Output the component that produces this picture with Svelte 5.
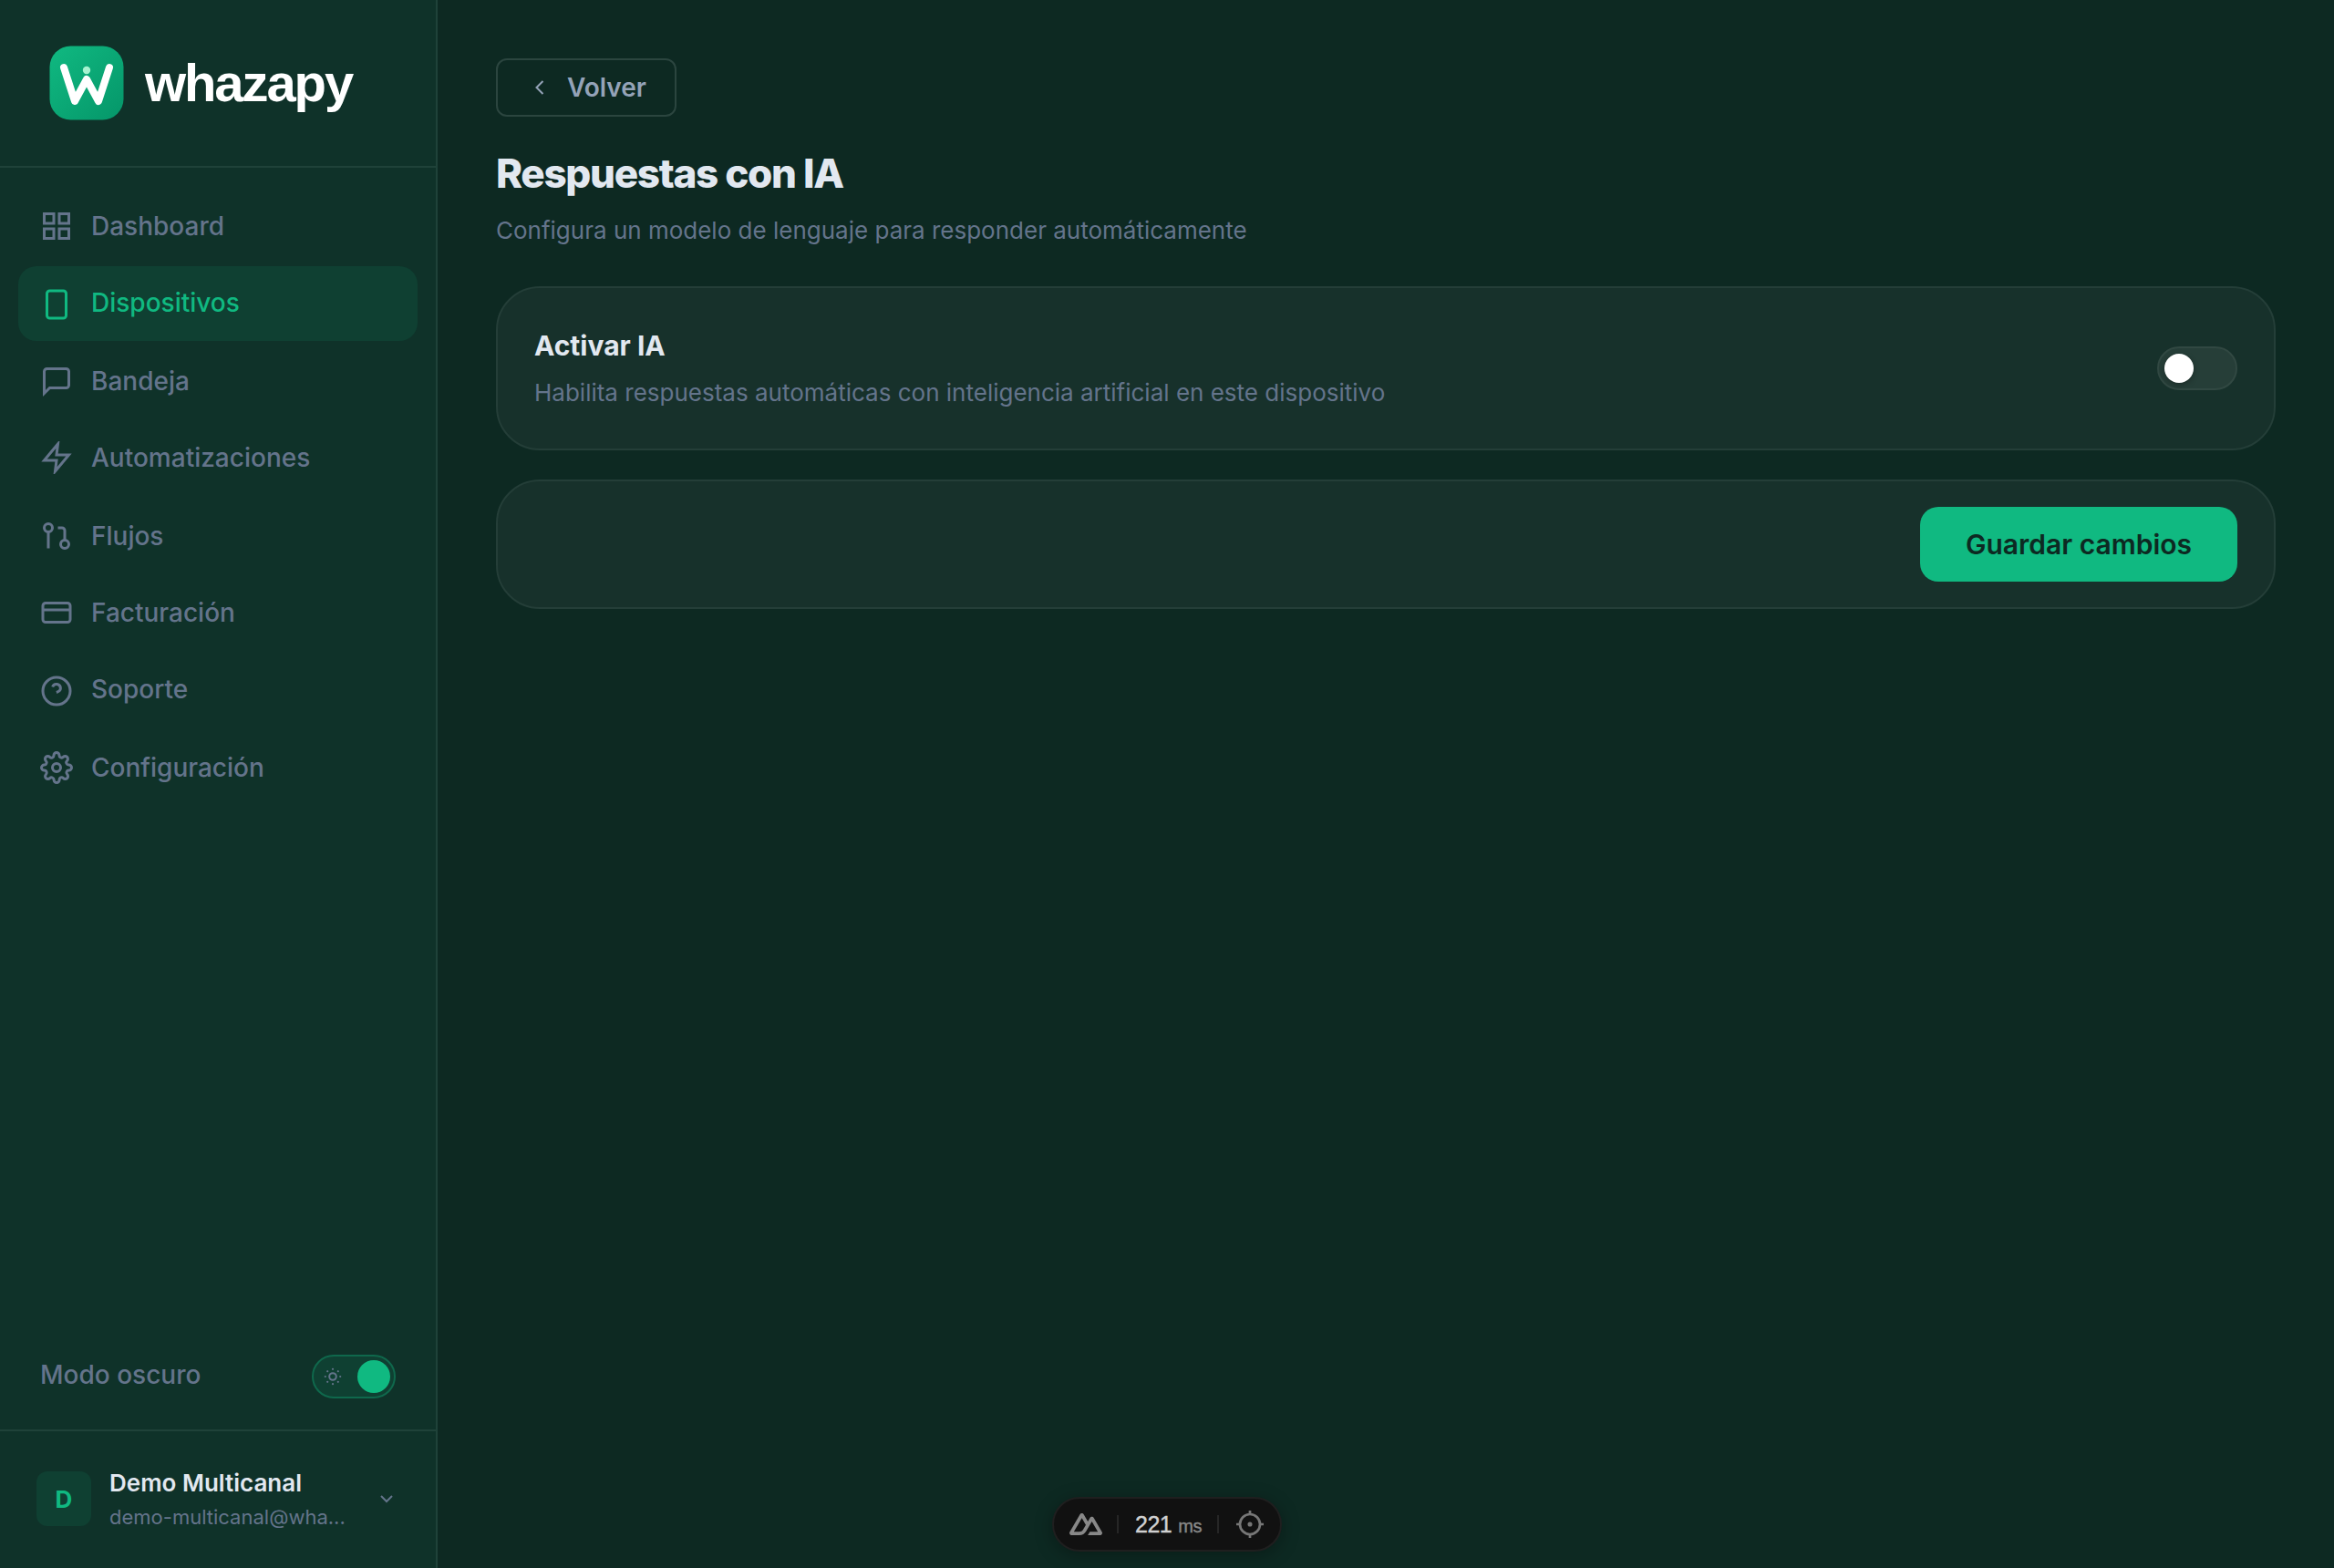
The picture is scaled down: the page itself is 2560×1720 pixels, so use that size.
<script>
  const navItems = [
    { label: 'Dashboard', icon: 'grid' },
    { label: 'Dispositivos', icon: 'device' },
    { label: 'Bandeja', icon: 'message' },
    { label: 'Automatizaciones', icon: 'zap' },
    { label: 'Flujos', icon: 'flow' },
    { label: 'Facturación', icon: 'card' },
    { label: 'Soporte', icon: 'help' },
    { label: 'Configuración', icon: 'settings' }
  ];

  let active = $state('Dispositivos');
  let aiEnabled = $state(false);
  let darkMode = $state(true);
</script>

<div class="app">
  <aside class="sidebar">
    <div class="brand">
      <svg class="brand-mark" viewBox="0 0 82 82">
        <defs>
          <linearGradient id="brand-fill" x1="0" y1="0" x2="1" y2="1">
            <stop offset="0" stop-color="#10b981" />
            <stop offset="1" stop-color="#059669" />
          </linearGradient>
        </defs>
        <rect x="0.5" y="0.5" width="81" height="81" rx="23" fill="url(#brand-fill)" />
        <path d="M16 24 L28 61 L41 37 L54 61 L66 24" fill="none" stroke="#ffffff" stroke-width="8"
              stroke-linecap="round" stroke-linejoin="round" />
        <circle cx="41" cy="27" r="4.2" fill="#a7f3d0" />
      </svg>
      <span class="brand-name">whazapy</span>
    </div>

    <nav class="nav">
      {#each navItems as item}
        <button class="nav-item" class:active={active === item.label} onclick={() => (active = item.label)}>
          <svg class="nav-icon" viewBox="0 0 24 24">
            {#if item.icon === 'grid'}
              <rect x="3" y="3" width="7" height="7" />
              <rect x="14" y="3" width="7" height="7" />
              <rect x="14" y="14" width="7" height="7" />
              <rect x="3" y="14" width="7" height="7" />
            {:else if item.icon === 'device'}
              <rect x="5" y="2" width="14" height="20" rx="2" />
            {:else if item.icon === 'message'}
              <path d="M21 15a2 2 0 0 1-2 2H7l-4 4V5a2 2 0 0 1 2-2h14a2 2 0 0 1 2 2z" />
            {:else if item.icon === 'zap'}
              <polygon points="13 2 3 14 12 14 11 22 21 10 12 10 13 2" />
            {:else if item.icon === 'flow'}
              <circle cx="18" cy="18" r="3" />
              <circle cx="6" cy="6" r="3" />
              <path d="M13 6h3a2 2 0 0 1 2 2v7M6 9v12" />
            {:else if item.icon === 'card'}
              <rect x="2" y="5" width="20" height="14" rx="2" />
              <path d="M2 10h20" />
            {:else if item.icon === 'help'}
              <circle cx="12" cy="12" r="10" />
              <path d="M9.09 9a3 3 0 0 1 5.83 1c0 2-3 3-3 3" />
            {:else}
              <circle cx="12" cy="12" r="3" />
              <path d="M19.4 15a1.65 1.65 0 0 0 .33 1.82l.06.06a2 2 0 0 1 0 2.83 2 2 0 0 1-2.83 0l-.06-.06a1.65 1.65 0 0 0-1.82-.33 1.65 1.65 0 0 0-1 1.51V21a2 2 0 0 1-2 2 2 2 0 0 1-2-2v-.09A1.65 1.65 0 0 0 9 19.4a1.65 1.65 0 0 0-1.82.33l-.06.06a2 2 0 0 1-2.83 0 2 2 0 0 1 0-2.83l.06-.06a1.65 1.65 0 0 0 .33-1.82 1.65 1.65 0 0 0-1.51-1H3a2 2 0 0 1-2-2 2 2 0 0 1 2-2h.09A1.65 1.65 0 0 0 4.6 9a1.65 1.65 0 0 0-.33-1.82l-.06-.06a2 2 0 0 1 0-2.83 2 2 0 0 1 2.83 0l.06.06a1.65 1.65 0 0 0 1.82.33H9a1.65 1.65 0 0 0 1-1.51V3a2 2 0 0 1 2-2 2 2 0 0 1 2 2v.09a1.65 1.65 0 0 0 1 1.51 1.65 1.65 0 0 0 1.82-.33l.06-.06a2 2 0 0 1 2.83 0 2 2 0 0 1 0 2.83l-.06.06a1.65 1.65 0 0 0-.33 1.82V9a1.65 1.65 0 0 0 1.51 1H21a2 2 0 0 1 2 2 2 2 0 0 1-2 2h-.09a1.65 1.65 0 0 0-1.51 1z" />
            {/if}
          </svg>
          <span class="nav-label">{item.label}</span>
        </button>
      {/each}
    </nav>

    <div class="theme-row">
      <span class="theme-label">Modo oscuro</span>
      <button class="theme-toggle" class:on={darkMode} aria-label="Modo oscuro" onclick={() => (darkMode = !darkMode)}>
        <svg class="sun" viewBox="0 0 20 20">
          <circle cx="10" cy="10" r="3.8" fill="none" stroke="currentColor" stroke-width="2" />
          {#each Array(8) as _, i}
            <circle cx="10" cy="1.8" r="1.1" fill="currentColor" transform="rotate({i * 45} 10 10)" />
          {/each}
        </svg>
        <span class="theme-knob"></span>
      </button>
    </div>

    <div class="user">
      <div class="avatar">D</div>
      <div class="user-info">
        <div class="user-name">Demo Multicanal</div>
        <div class="user-email">demo-multicanal@wha...</div>
      </div>
      <svg class="user-chevron" viewBox="0 0 24 24">
        <polyline points="6 9 12 15 18 9" />
      </svg>
    </div>
  </aside>

  <main class="content">
    <button class="back">
      <svg class="back-icon" viewBox="0 0 24 24">
        <path d="M15 5l-7 7 7 7" />
      </svg>
      <span>Volver</span>
    </button>
    <h1>Respuestas con IA</h1>
    <p class="subtitle">Configura un modelo de lenguaje para responder automáticamente</p>

    <section class="card card-toggle">
      <div class="card-body">
        <h2>Activar IA</h2>
        <p class="card-text">Habilita respuestas automáticas con inteligencia artificial en este dispositivo</p>
      </div>
      <button class="switch" class:on={aiEnabled} aria-label="Activar IA" onclick={() => (aiEnabled = !aiEnabled)}>
        <span class="switch-knob"></span>
      </button>
    </section>

    <section class="card card-actions">
      <button class="save">Guardar cambios</button>
    </section>
  </main>

  <!-- Devtools pill, floats over the page -->
  <div class="devtools">
    <svg class="devtools-logo" viewBox="0 54 324 216">
      <path d="M181.767 270H302.211C306.037 270 309.795 269.003 313.108 267.107C316.421 265.211 319.172 262.484 321.084 259.2C322.996 255.915 324.002 252.19 324 248.399C323.998 244.607 322.989 240.883 321.074 237.601L240.187 98.744C238.275 95.461 235.525 92.734 232.213 90.839C228.901 88.943 225.143 87.945 221.318 87.945C217.494 87.945 213.736 88.943 210.424 90.839C207.112 92.734 204.361 95.461 202.449 98.744L181.767 134.272L141.329 64.798C139.416 61.515 136.664 58.788 133.351 56.893C130.038 54.998 126.28 54 122.454 54C118.629 54 114.871 54.998 111.558 56.893C108.245 58.788 105.493 61.515 103.58 64.798L2.926 237.601C1.011 240.883 0 244.607 0 248.399C0 252.19 1.004 255.915 2.916 259.2C4.828 262.484 7.579 265.211 10.892 267.107C14.205 269.003 17.963 270 21.789 270H97.394C127.349 270 149.44 256.959 164.641 231.517L201.546 168.172L221.313 134.272L280.637 236.1H201.546L181.767 270ZM96.161 236.065L43.398 236.054L122.49 100.291L161.953 168.172L135.531 213.543C125.436 230.051 113.968 236.065 96.161 236.065Z" fill="currentColor" />
    </svg>
    <span class="devtools-sep"></span>
    <span class="devtools-time">221<small>ms</small></span>
    <span class="devtools-sep"></span>
    <svg class="devtools-target" viewBox="0 0 30 30">
      <circle cx="15" cy="15" r="11" />
      <circle cx="15" cy="15" r="1.2" />
      <path d="M15 0v5M15 25v5M0 15h5M25 15h5" />
    </svg>
  </div>
</div>

<style>
  :global(body) {
    background: #0d2922;
  }

  .app {
    display: flex;
    width: 2560px;
    height: 1720px;
    overflow: hidden;
    background: #0d2922;
    font-family: 'Inter', sans-serif;
    color: #e2e8f0;
  }

  button {
    margin: 0;
    padding: 0;
    border: none;
    background: none;
    font-family: inherit;
    cursor: pointer;
  }

  h1,
  h2,
  p {
    margin: 0;
  }

  .sidebar {
    box-sizing: border-box;
    display: flex;
    flex-direction: column;
    flex: none;
    width: 480px;
    background: #0f3229;
    border-right: 2px solid #1f4239;
  }

  .brand {
    box-sizing: border-box;
    display: flex;
    align-items: flex-start;
    height: 184px;
    padding: 50px 0 0 54px;
    border-bottom: 2px solid #1f4239;
  }

  .brand-mark {
    width: 82px;
    height: 82px;
  }

  .brand-name {
    margin: 8px 0 0 23px;
    font-family: 'Liberation Sans', Arial, sans-serif;
    font-size: 58px;
    font-weight: 700;
    line-height: 66px;
    letter-spacing: -2.1px;
    color: #ffffff;
  }

  .nav {
    display: grid;
    grid-template-rows: 80px 82px 80px 80px 82px 80px 82px 80px;
    row-gap: 4px;
    padding: 24px 20px 0;
  }

  .nav-item {
    display: flex;
    align-items: center;
    gap: 20px;
    padding-left: 24px;
    border-radius: 20px;
    font-size: 28px;
    font-weight: 500;
    line-height: 44px;
    color: #64748b;
  }

  .nav-item.active {
    background: #0f4032;
    color: #10b981;
  }

  .nav-icon {
    width: 36px;
    height: 36px;
    fill: none;
    stroke: currentColor;
    stroke-width: 2;
  }

  .nav-item:nth-child(5) {
    padding-top: 2px;
  }

  .nav-item:nth-child(2) .nav-icon,
  .nav-item:nth-child(7) .nav-icon {
    margin-top: 2px;
  }

  .nav-item:nth-child(2) .nav-label,
  .nav-item:nth-child(7) .nav-label {
    margin-bottom: 2px;
  }

  .theme-row {
    display: flex;
    align-items: center;
    justify-content: space-between;
    margin-top: auto;
    padding: 0 44px 34px;
  }

  .theme-label {
    font-size: 28px;
    font-weight: 500;
    line-height: 44px;
    color: #64748b;
    padding-bottom: 4px;
  }

  .theme-toggle {
    box-sizing: border-box;
    display: flex;
    align-items: center;
    justify-content: space-between;
    width: 92px;
    height: 48px;
    padding: 0 4px 0 11px;
    border: 2px solid #0f684c;
    border-radius: 24px;
    background: #0f4032;
    color: #64748b;
  }

  .sun {
    width: 20px;
    height: 20px;
  }

  .theme-knob {
    width: 36px;
    height: 36px;
    border-radius: 50%;
    background: #10b981;
  }

  .user {
    box-sizing: border-box;
    display: flex;
    align-items: center;
    height: 152px;
    padding: 0 42px 2px 40px;
    border-top: 2px solid #1f4239;
  }

  .avatar {
    width: 60px;
    height: 60px;
    border-radius: 12px;
    background: #0f4032;
    font-size: 26px;
    font-weight: 700;
    line-height: 61px;
    text-align: center;
    color: #10b981;
  }

  .user-info {
    flex: 1;
    margin-left: 20px;
    white-space: nowrap;
  }

  .user-name {
    padding-top: 1px;
    font-size: 26px;
    font-weight: 600;
    line-height: 40px;
  }

  .user-email {
    font-size: 22px;
    line-height: 35px;
    color: #64748b;
  }

  .user-chevron {
    width: 24px;
    height: 24px;
    fill: none;
    stroke: #64748b;
    stroke-width: 2;
  }

  .content {
    flex: 1;
    display: flex;
    flex-direction: column;
    align-items: stretch;
    padding: 64px 64px 0;
  }

  .back {
    box-sizing: border-box;
    display: flex;
    align-items: center;
    align-self: flex-start;
    width: 198px;
    height: 64px;
    padding-left: 33px;
    gap: 16px;
    border: 2px solid #2b453f;
    border-radius: 12px;
    font-size: 28px;
    font-weight: 600;
    color: #94a3b8;
  }

  .back-icon {
    width: 27px;
    height: 24px;
    fill: none;
    stroke: currentColor;
    stroke-width: 2;
  }

  h1 {
    margin-top: 34px;
    font-size: 44px;
    font-weight: 800;
    line-height: 56px;
    letter-spacing: -1.32px;
  }

  .subtitle {
    margin-top: 14px;
    font-size: 26px;
    line-height: 42px;
    color: #64748b;
  }

  .card {
    box-sizing: border-box;
    display: flex;
    align-items: center;
    border: 2px solid #243e38;
    border-radius: 48px;
    background: #17312b;
    padding: 0 40px;
  }

  .card-toggle {
    justify-content: space-between;
    height: 180px;
    margin-top: 40px;
  }

  .card-actions {
    justify-content: flex-end;
    height: 142px;
    margin-top: 32px;
  }

  .card-body {
    padding-bottom: 2px;
  }

  h2 {
    font-size: 30px;
    font-weight: 700;
    line-height: 48px;
  }

  .card-text {
    margin-top: 7px;
    font-size: 26px;
    line-height: 42px;
    color: #64748b;
  }

  .switch {
    box-sizing: border-box;
    display: flex;
    align-items: center;
    width: 88px;
    height: 48px;
    padding: 0 6px;
    border: 2px solid #314842;
    border-radius: 24px;
    background: #263e38;
  }

  .switch.on {
    justify-content: flex-end;
    background: #10b981;
  }

  .switch-knob {
    width: 32px;
    height: 32px;
    border-radius: 50%;
    background: #ffffff;
    box-shadow: 0 2px 6px rgba(0, 0, 0, 0.3);
  }

  .save {
    width: 348px;
    height: 82px;
    border-radius: 20px;
    background: #10b981;
    font-size: 30px;
    font-weight: 600;
    color: #0d2922;
  }

  .devtools {
    position: absolute;
    left: 1154px;
    top: 1642px;
    box-sizing: border-box;
    display: flex;
    align-items: center;
    width: 252px;
    height: 60px;
    padding: 0 17px;
    border: 2px solid #1f1f1f;
    border-radius: 30px;
    background: #111111;
    box-shadow: 0 4px 20px rgba(0, 0, 0, 0.3);
    font-family: 'Liberation Sans', Arial, sans-serif;
    color: #888888;
  }

  .devtools-logo {
    width: 36px;
    height: 24px;
  }

  .devtools-sep {
    width: 2px;
    height: 20px;
    background: #262626;
  }

  .devtools-logo + .devtools-sep {
    margin-left: 16px;
  }

  .devtools-time {
    display: flex;
    align-items: baseline;
    gap: 7px;
    width: 90px;
    margin-left: 18px;
    font-size: 25px;
    letter-spacing: -0.5px;
    white-space: nowrap;
    color: #d0d0d0;
    -webkit-text-stroke: 0.4px currentColor;
  }

  .devtools-time small {
    font-size: 20px;
    color: #888888;
  }

  .devtools-target {
    width: 30px;
    height: 30px;
    margin-left: 19px;
    fill: none;
    stroke: #777777;
    stroke-width: 2.7;
  }
</style>
